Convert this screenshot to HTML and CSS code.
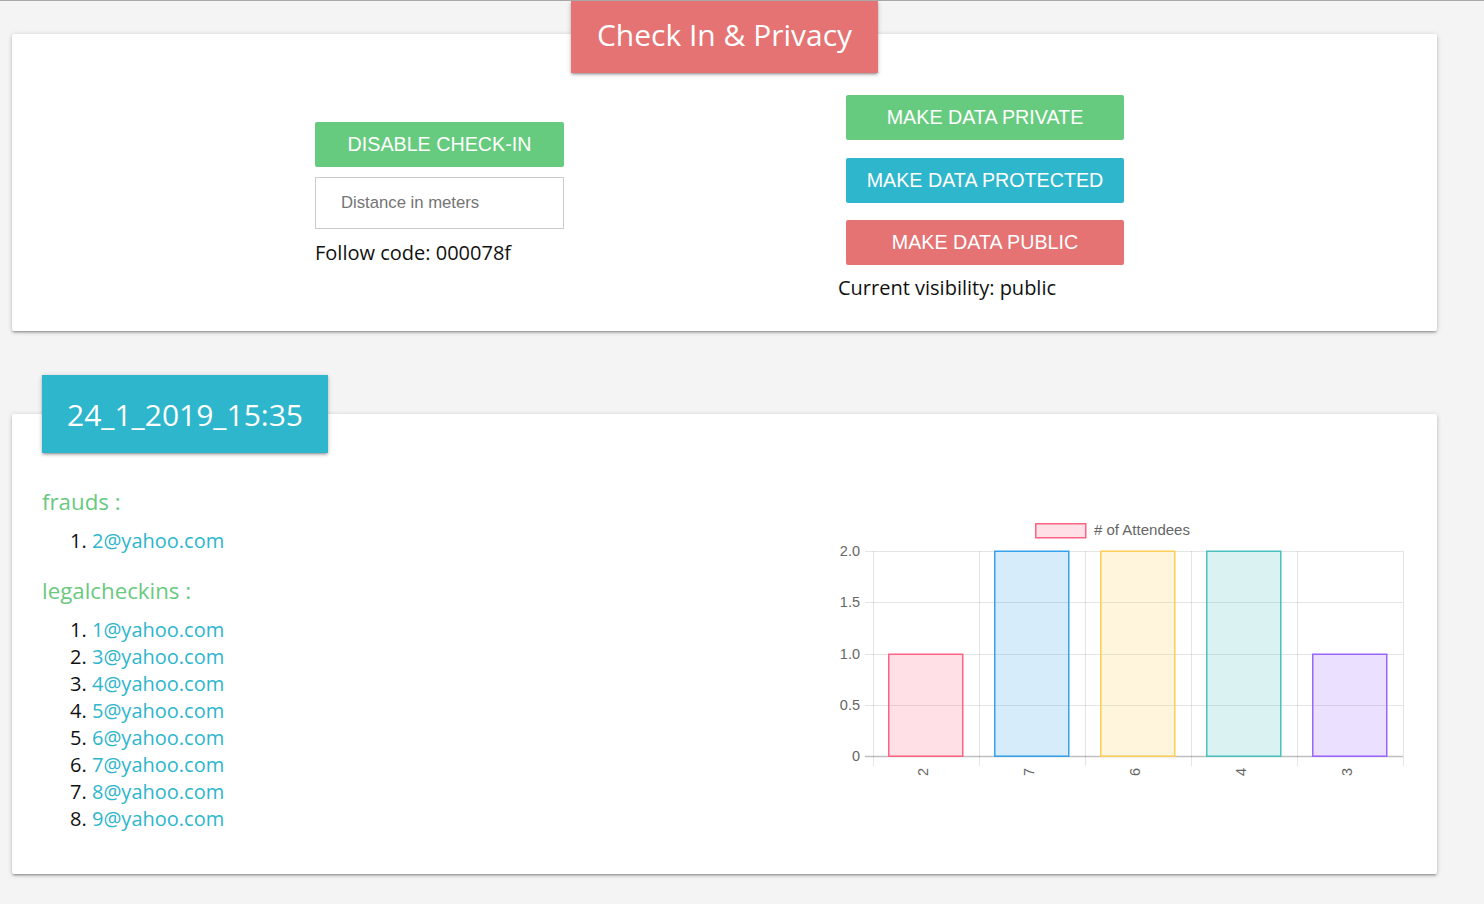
FILE: index.html
```html
<!DOCTYPE html>
<html lang="en">
<head>
<meta charset="utf-8">
<title>Check In &amp; Privacy</title>
<link rel="stylesheet" href="styles.css">
</head>
<body>
<main class="page">
  <section class="card card-top">
    <h1 class="badge badge-red">Check In &amp; Privacy</h1>
    <div class="controls">
      <div class="col-left">
        <button class="btn btn-green btn-full">DISABLE CHECK-IN</button>
        <input class="distance" type="text" placeholder="Distance in meters">
        <p class="info">Follow code: 000078f</p>
      </div>
      <div class="col-right">
        <div class="btn-stack">
          <button class="btn btn-green btn-wide">MAKE DATA PRIVATE</button>
          <button class="btn btn-cyan btn-wide">MAKE DATA PROTECTED</button>
          <button class="btn btn-red btn-wide">MAKE DATA PUBLIC</button>
        </div>
        <p class="info">Current visibility: public</p>
      </div>
    </div>
  </section>

  <section class="card card-session">
    <h2 class="badge badge-cyan">24_1_2019_15:35</h2>
    <div class="session-body">
      <div class="lists">
        <h3 class="list-title">frauds :</h3>
        <ol class="emails">
          <li><a href="#">2@yahoo.com</a></li>
        </ol>
        <h3 class="list-title">legalcheckins :</h3>
        <ol class="emails">
          <li><a href="#">1@yahoo.com</a></li>
          <li><a href="#">3@yahoo.com</a></li>
          <li><a href="#">4@yahoo.com</a></li>
          <li><a href="#">5@yahoo.com</a></li>
          <li><a href="#">6@yahoo.com</a></li>
          <li><a href="#">7@yahoo.com</a></li>
          <li><a href="#">8@yahoo.com</a></li>
          <li><a href="#">9@yahoo.com</a></li>
        </ol>
      </div>
      <svg class="chart" width="580" height="280" viewBox="0 0 580 280" xmlns="http://www.w3.org/2000/svg">
        <rect x="205.75" y="8.75" width="50" height="14" fill="rgba(255,99,132,0.2)" stroke="rgb(255,99,132)" stroke-width="1.5"/>
        <text class="legend" x="264" y="20">
# of Attendees</text>
        <g stroke="rgba(0,0,0,0.1)" stroke-width="1">
          <line x1="35" y1="36.5" x2="573" y2="36.5"/>
          <line x1="35" y1="87.5" x2="573" y2="87.5"/>
          <line x1="35" y1="139.5" x2="573" y2="139.5"/>
          <line x1="35" y1="190.5" x2="573" y2="190.5"/>
          <line x1="43.5" y1="36" x2="43.5" y2="251"/>
          <line x1="149.5" y1="36" x2="149.5" y2="251"/>
          <line x1="255.5" y1="36" x2="255.5" y2="251"/>
          <line x1="361.5" y1="36" x2="361.5" y2="251"/>
          <line x1="467.5" y1="36" x2="467.5" y2="251"/>
          <line x1="573.5" y1="36" x2="573.5" y2="251"/>
        </g>
        <line x1="35" y1="241.5" x2="573" y2="241.5" stroke="rgba(0,0,0,0.25)" stroke-width="1.5"/>
        <g class="axis" text-anchor="end">
          <text x="30" y="41">2.0</text>
          <text x="30" y="92">1.5</text>
          <text x="30" y="144">1.0</text>
          <text x="30" y="195">0.5</text>
          <text x="30" y="246">0</text>
        </g>
        <g stroke-width="1.5">
          <rect x="58.75" y="139.25" width="74" height="102" fill="rgba(255,99,132,0.2)" stroke="rgb(255,99,132)"/>
          <rect x="164.75" y="36.25" width="74" height="205" fill="rgba(54,162,235,0.2)" stroke="rgb(54,162,235)"/>
          <rect x="270.75" y="36.25" width="74" height="205" fill="rgba(255,206,86,0.2)" stroke="rgb(255,206,86)"/>
          <rect x="376.75" y="36.25" width="74" height="205" fill="rgba(75,192,192,0.2)" stroke="rgb(75,192,192)"/>
          <rect x="482.75" y="139.25" width="74" height="102" fill="rgba(153,102,255,0.2)" stroke="rgb(153,102,255)"/>
        </g>
        <g class="axis" text-anchor="middle">
          <text transform="translate(98,257) rotate(-90)">2</text>
          <text transform="translate(204,257) rotate(-90)">7</text>
          <text transform="translate(310,257) rotate(-90)">6</text>
          <text transform="translate(416,257) rotate(-90)">4</text>
          <text transform="translate(522,257) rotate(-90)">3</text>
        </g>
      </svg>
    </div>
  </section>
</main>
</body>
</html>
```

FILE: styles.css
```css
html, body {
  margin: 0;
  padding: 0;
}

body {
  background: #f4f4f4;
  border-top: 1px solid #a8a8a8;
  font-family: "Open Sans", "Liberation Sans", sans-serif;
  color: #111;
  min-height: 903px;
}

.page {
  padding: 33px 0 0 12px;
}

.card {
  width: 1425px;
  background: #fff;
  border-radius: 2px;
  box-shadow: 0 2px 2px 0 rgba(0,0,0,0.14), 0 3px 1px -2px rgba(0,0,0,0.12), 0 1px 5px 0 rgba(0,0,0,0.2);
  display: flex;
  flex-direction: column;
}

.card-session {
  margin-top: 83px;
}

.badge {
  margin: 0;
  font-weight: 400;
  color: #fff;
  font-size: 30px;
  box-shadow: 0 2px 2px 0 rgba(0,0,0,0.14), 0 3px 1px -2px rgba(0,0,0,0.12), 0 1px 5px 0 rgba(0,0,0,0.2);
}

.badge-red {
  background: #e57373;
  align-self: center;
  margin-top: -33px;
  height: 72px;
  line-height: 68px;
  padding: 0 26px;
}

.badge-cyan {
  background: #2db6cc;
  align-self: flex-start;
  margin: -39px 0 0 30px;
  height: 78px;
  line-height: 80px;
  padding: 0 25px;
}

.controls {
  display: flex;
  align-items: flex-start;
  padding: 22px 0 30px 303px;
  gap: 274px;
}

.col-left {
  width: 249px;
  margin-top: 27px;
  display: flex;
  flex-direction: column;
}

.col-right {
  width: 286px;
  display: flex;
  flex-direction: column;
}

.btn-stack {
  display: flex;
  flex-direction: column;
  gap: 17.5px;
  padding-left: 8px;
}

.btn {
  border: none;
  border-radius: 2px;
  height: 45px;
  padding: 0;
  color: #fff;
  font-family: "Liberation Sans", Arial, sans-serif;
  font-size: 19.7px;
  text-align: center;
  box-shadow: none;
}

.btn-full { width: 249px; }
.btn-wide { width: 278px; }

.btn-green { background: #66cb7e; }
.btn-cyan { background: #2db6cc; }
.btn-red { background: #e57373; }

.distance {
  box-sizing: border-box;
  margin-top: 10px;
  width: 249px;
  height: 52px;
  border: 1px solid #cccccc;
  padding: 0 0 0 25px;
  font-family: "Liberation Sans", Arial, sans-serif;
  font-size: 16.7px;
  outline: none;
}

.distance::placeholder {
  color: #757575;
}

.info {
  margin: 11px 0 0;
  font-size: 20px;
  line-height: 26px;
  color: #111;
}

.col-right .info {
  margin-top: 10px;
}

.session-body {
  display: flex;
  justify-content: space-between;
  align-items: flex-start;
  padding: 34px 27px 42px 30px;
}

.list-title {
  margin: 0 0 10px;
  font-size: 22.3px;
  line-height: 30px;
  font-weight: 400;
  color: #69c97f;
}

.emails {
  margin: 0 0 22px;
  padding-left: 50px;
  font-size: 20px;
  line-height: 27px;
}

.emails:last-child {
  margin-bottom: 0;
}

.emails li {
  color: #111;
}

.emails a {
  color: #2db6cc;
  text-decoration: none;
}

.chart {
  margin-top: 28px;
  display: block;
}

.chart text {
  font-family: "Liberation Sans", Arial, sans-serif;
  fill: #666;
}

.legend {
  font-size: 15px;
}

.axis text {
  font-size: 14.5px;
}
```
